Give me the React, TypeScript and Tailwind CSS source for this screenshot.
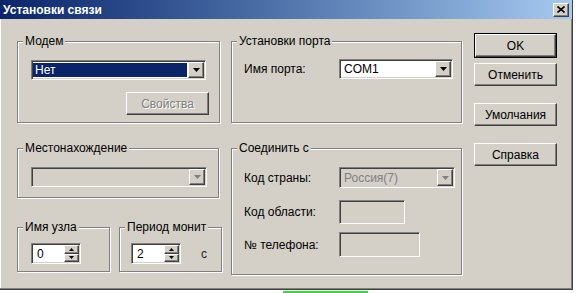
import React from 'react';

// classic 3D edges
const raised =
  'border border-t-white border-l-white border-r-[#404040] border-b-[#404040] bg-[#d4d0c8] shadow-[inset_-1px_-1px_0_#808080]';
const sunken =
  'border border-t-[#808080] border-l-[#808080] border-r-white border-b-white shadow-[inset_1px_1px_0_#404040,inset_-1px_-1px_0_#d4d0c8] p-[1px]';

const Group: React.FC<{ label: string; className?: string; children?: React.ReactNode }> = ({
  label,
  className = '',
  children,
}) => (
  <div
    className={`flex flex-col border border-[#808080] shadow-[inset_1px_1px_0_#fff,1px_1px_0_#fff] ${className}`}
  >
    <div className="-mt-[8px] ml-[5px] h-[14px] w-fit bg-[#d4d0c8] px-[2px] leading-[14px]">{label}</div>
    {children}
  </div>
);

const DropArrow = ({ disabled = false }: { disabled?: boolean }) => (
  <div className={`flex h-full w-[16px] shrink-0 items-center justify-center ${raised}`}>
    <svg width="7" height="4" viewBox="0 0 7 4">
      <path d="M0 0h7L3.5 4z" fill={disabled ? '#808080' : '#000'} />
    </svg>
  </div>
);

const Select = ({
  value,
  className = '',
  disabled = false,
  selected = false,
}: {
  value?: string;
  className?: string;
  disabled?: boolean;
  selected?: boolean;
}) => (
  <div className={`flex ${sunken} ${disabled ? 'bg-[#d4d0c8]' : 'bg-white'} ${className}`}>
    <div className="flex min-w-0 flex-1 items-center">
      {selected ? (
        <div className="my-[1px] mr-[1px] flex h-[calc(100%-2px)] flex-1 items-center bg-[#0a246a] pl-[2px] text-white">
          {value}
        </div>
      ) : (
        <span className={`pl-[3px] ${disabled ? 'text-[#808080]' : 'text-black'}`}>{value}</span>
      )}
    </div>
    <DropArrow disabled={disabled} />
  </div>
);

const Spin = ({ value }: { value: string }) => (
  <div className={`flex h-[21px] w-[50px] bg-white ${sunken}`}>
    <div className="flex flex-1 items-center pl-[4px]">{value}</div>
    <div className="flex w-[15px] flex-col">
      <div className={`flex flex-1 items-center justify-center ${raised}`}>
        <svg width="5" height="3" viewBox="0 0 5 3">
          <path d="M2.5 0L5 3H0z" fill="#000" />
        </svg>
      </div>
      <div className={`flex flex-1 items-center justify-center ${raised}`}>
        <svg width="5" height="3" viewBox="0 0 5 3">
          <path d="M0 0h5L2.5 3z" fill="#000" />
        </svg>
      </div>
    </div>
  </div>
);

const Button = ({ children, className = '', disabled = false }: { children: React.ReactNode; className?: string; disabled?: boolean }) => (
  <div className={`flex items-center justify-center ${raised} ${className}`}>
    <span className={disabled ? 'text-[#808080] [text-shadow:1px_1px_0_#fff]' : 'text-black'}>{children}</span>
  </div>
);

const Field = ({ className = '' }: { className?: string }) => <div className={`bg-[#d4d0c8] ${sunken} ${className}`} />;

export default function App() {
  return (
    <div className="h-[293px] w-[576px] overflow-hidden bg-white font-['Liberation_Sans',Arial,sans-serif] text-[12px] text-black">
      <div className="flex h-[290px] w-[573px] flex-col border-r border-b border-[#404040] bg-[#d4d0c8] shadow-[inset_-1px_-1px_0_#808080,inset_1px_0_0_#fff]">
        {/* title bar */}
        <div className="flex h-[19px] items-center bg-linear-to-r from-[#0a246a] to-[#a6caf0] pl-[3px]">
          <span className="font-bold text-white">Установки связи</span>
          <div className={`ml-auto mr-[3px] flex h-[14px] w-[16px] items-center justify-center ${raised}`}>
            <svg width="8" height="7" viewBox="0 0 8 7">
              <path d="M0.5 0.5L7.5 6.5M7.5 0.5L0.5 6.5" stroke="#000" strokeWidth="1.6" />
            </svg>
          </div>
        </div>

        <div className="flex">
          {/* groups */}
          <div className="ml-[17px] mt-[22px] flex flex-col">
            <div className="flex">
              <Group label="Модем" className="h-[82px] w-[203px]">
                <Select value="Нет" selected className="ml-[13px] mt-[12px] h-[20px] w-[175px]" />
                <Button disabled className="ml-[108px] mt-[12px] h-[23px] w-[83px]">
                  Свойства
                </Button>
              </Group>
              <Group label="Установки порта" className="ml-[11px] h-[82px] w-[231px]">
                <div className="ml-[12px] mt-[11px] flex items-center">
                  <span className="w-[95px]">Имя порта:</span>
                  <Select value="COM1" className="h-[20px] w-[114px]" />
                </div>
              </Group>
            </div>

            <div className="mt-[25px] flex">
              <div className="flex w-[205px] flex-col">
                <Group label="Местонахождение" className="h-[50px] w-[202px]">
                  <Select disabled className="ml-[13px] mt-[12px] h-[20px] w-[176px]" />
                </Group>
                <div className="mt-[29px] flex">
                  <Group label="Имя узла" className="h-[45px] w-[93px]">
                    <div className="ml-[13px] mt-[9px]">
                      <Spin value="0" />
                    </div>
                  </Group>
                  <Group label="Период монит" className="ml-[9px] h-[45px] w-[103px]">
                    <div className="ml-[11px] mt-[9px] flex items-center">
                      <Spin value="2" />
                      <span className="ml-[20px] mt-[1px] text-[#202020]">с</span>
                    </div>
                  </Group>
                </div>
              </div>

              <Group label="Соединить с" className="ml-[9px] h-[127px] w-[231px]">
                <div className="ml-[12px] mt-[12px] flex items-center">
                  <span className="w-[95px]">Код страны:</span>
                  <Select disabled value="Россия(7)" className="h-[21px] w-[116px]" />
                </div>
                <div className="ml-[12px] mt-[12px] flex items-center">
                  <span className="w-[95px]">Код области:</span>
                  <Field className="h-[24px] w-[66px]" />
                </div>
                <div className="ml-[12px] mt-[8px] flex items-center">
                  <span className="w-[95px]">№ телефона:</span>
                  <Field className="h-[25px] w-[81px]" />
                </div>
              </Group>
            </div>
          </div>

          {/* buttons */}
          <div className="ml-[12px] mt-[14px] flex w-[83px] flex-col">
            <div className="h-[25px] border border-black">
              <Button className="h-full w-full">OK</Button>
            </div>
            <Button className="mt-[5px] h-[23px]">Отменить</Button>
            <Button className="mt-[17px] h-[23px]">Умолчания</Button>
            <Button className="mt-[17px] h-[23px]">Справка</Button>
          </div>
        </div>
      </div>
      <div className="ml-[283px] mt-[1px] h-[2px] w-[85px] bg-[#3fd13f]" />
    </div>
  );
}
